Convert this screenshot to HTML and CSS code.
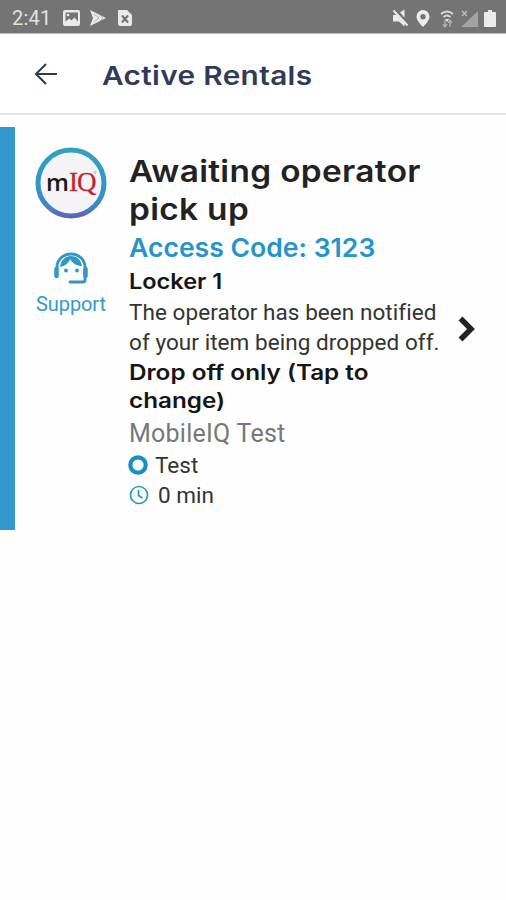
FILE: index.html
```html
<!DOCTYPE html>
<html lang="en">
<head>
<meta charset="utf-8">
<title>Active Rentals</title>
<link rel="stylesheet" href="styles.css">
</head>
<body>
<div class="statusbar">
  <span class="time">2:41</span>
  <svg class="left-icons" width="72" height="20" viewBox="0 0 72 20" fill="#e9e9e9">
    <path fill-rule="evenodd" d="M2 2h13q2 0 2 2v12q0 2-2 2H2q-2 0-2-2V4q0-2 2-2zM2.500 4.500v9l4-3 2 2 3-3 3.500 4v-9z"/>
    <circle cx="5" cy="7" r="1.300"/>
    <path d="M27 2l16 8-16 8 3-8z"/>
    <path d="M31 6l5 4-5 4M37 7l3 3-3 3" fill="none" stroke="#b5b5b5"/>
    <path d="M55 2h9l5 5v9q0 2-2 2H57q-2 0-2-2z"/>
    <path d="M59 7.500l6 7M65 7.500l-6 7" fill="none" stroke="#707070" stroke-width="2"/>
  </svg>
  <svg class="right-icons" width="106" height="20" viewBox="392 7 106 20" fill="#ececec">
    <path d="M393 14h3.500l8 8.500v3l-5.500-5h-6z"/>
    <path d="M400 11.500l4.500-3v8z"/>
    <path d="M393.500 9.500l14 15" stroke="#ececec" stroke-width="2"/>
    <path fill-rule="evenodd" d="M423 9a6.500 6.500 0 0 1 6.500 6.500c0 4.500-6.500 10.500-6.500 10.500s-6.500-6-6.500-10.500a6.500 6.500 0 0 1 6.500-6.500zm0 4a2.700 2.700 0 1 0 0 5.400 2.700 2.700 0 0 0 0-5.400z"/>
    <path d="M441 13q6-5 12 0M443.500 16q3.500-3 7 0" fill="none" stroke="#dadada" stroke-width="1.800"/>
    <path d="M445 18h4l-2 3z"/>
    <path d="M445 19v6m-2-2l2 3 2-3M450 26v-6m-2 2l2-3 2 3" fill="none" stroke="#b5b5b5" stroke-width="1.300"/>
    <path d="M478 10v16h-17z" fill="#a3a3a3"/>
    <path d="M462 10l5 5M467 10l-5 5" stroke="#c0c0c0" stroke-width="1.300"/>
    <path d="M488 9h4v2h3q1 0 1 1v13q0 1-1 1h-10q-1 0-1-1V12q0-1 1-1h3z"/>
  </svg>
</div>
<header class="appbar">
  <svg class="back" width="24" height="24" viewBox="0 0 24 24" fill="none" stroke="#303a59" stroke-width="2">
    <path d="M23 12H2M12 2L2 12l10 10"/>
  </svg>
  <h1>Active Rentals</h1>
</header>
<main class="rental">
  <aside class="side">
    <svg class="logo" width="72" height="72" viewBox="0 0 72 72">
      <defs><linearGradient id="ring" x1="0" y1="0" x2="0" y2="1">
        <stop offset="0" stop-color="#2fa3ba"/><stop offset=".5" stop-color="#3297cb"/>
        <stop offset=".88" stop-color="#4384c4"/><stop offset="1" stop-color="#6562b5"/>
      </linearGradient></defs>
      <circle cx="36" cy="36" r="33" fill="#f4f4f7" stroke="url(#ring)" stroke-width="5"/>
      <text x="11" y="44"><tspan class="logo-m">m</tspan><tspan class="logo-iq">IQ</tspan></text>
      <path d="M58.500 25h3M60 25v2" stroke="#999" stroke-width=".7"/>
    </svg>
    <svg class="agent" width="38" height="34" viewBox="0 0 38 34" fill="none" stroke="#3197c9">
      <path d="M5 17V15a14 13 0 0 1 28 0v13q0 2-2 2H18" stroke-width="2.900" stroke-linecap="round"/>
      <path d="M4.500 17v7M33.500 17v7" stroke-width="4.500" stroke-linecap="round"/>
      <path d="M8 15c5-1 9-4 10-8 3 5 7 7 12 7-1-6-5-10-11-10S9 8 8 15z" fill="#3197c9" stroke="none"/>
      <circle cx="14" cy="18.500" r="1.900" fill="#3197c9" stroke="none"/>
      <circle cx="25" cy="18.500" r="1.900" fill="#3197c9" stroke="none"/>
    </svg>
    <span class="support">Support</span>
  </aside>
  <section class="details">
    <h2>Awaiting operator<br>pick up</h2>
    <p class="code">Access Code: 3123</p>
    <p class="strong locker">Locker 1</p>
    <p class="desc">The operator has been notified<br>of your item being dropped off.</p>
    <p class="strong drop">Drop off only (Tap to<br>change)</p>
    <p class="org">MobileIQ Test</p>
    <p class="row place"><svg width="20" height="20" viewBox="0 0 20 20"><circle cx="10" cy="10" r="7.700" fill="none" stroke="#168fc5" stroke-width="4.200"/></svg><span class="label">Test</span></p>
    <p class="row duration"><svg width="20" height="20" viewBox="0 0 20 20" fill="none" stroke="#2d95c5" stroke-width="1.700"><circle cx="10" cy="10" r="8.500"/><path d="M9.500 5v5.500l4 2.500"/></svg><span class="label">0 min</span></p>
  </section>
  <svg class="chevron" width="18" height="26" viewBox="0 0 18 26" fill="none" stroke="#222" stroke-width="5.500">
    <path d="M2.500 2.500L13 13 2.500 23.500"/>
  </svg>
</main>
</body>
</html>
```
FILE: styles.css
```css
* { box-sizing: border-box; }
body {
  margin: 0;
  background: #fefefe;
  color: #222;
  font-family: Roboto, "Liberation Sans", sans-serif;
}
h1, h2, p { margin: 0; white-space: nowrap; }
svg { display: block; flex: none; }
.statusbar {
  display: flex;
  align-items: center;
  height: 34px;
  padding: 2px 8px 0 12px;
  background: #747474;
  border-bottom: 1px solid #bcbcbc;
}
.time { width: 51px; color: #e2e2e2; font-size: 20px; letter-spacing: .2px; }
.right-icons { margin-left: auto; }
.appbar {
  display: flex;
  align-items: center;
  height: 81px;
  padding: 0 34px;
  background: #fff;
  border-bottom: 2px solid #e5e5e5;
}
h1, h2, .code, .strong { transform-origin: left center; }
h1 {
  margin: 5px 0 0 44px;
  color: #303a59;
  font: 600 26px/36px Inter, sans-serif;
  letter-spacing: .3px;
  transform: scaleX(1.145);
}
.rental {
  display: flex;
  height: 403px;
  margin-top: 12px;
  border-left: 15px solid #3398cc;
}
.side {
  display: flex;
  flex-direction: column;
  align-items: center;
  width: 112px;
  padding-top: 20px;
}
.logo-m { font: 600 24px "Open Sans", sans-serif; fill: #171717; }
.logo-iq { font: 27px "Liberation Serif", serif; fill: #c41f32; stroke: #c41f32; stroke-width: .3px; letter-spacing: -1px; }
.agent { margin-top: 33px; }
.support { margin-top: 5px; color: #3599ca; font-size: 20px; line-height: 26px; letter-spacing: -.1px; }
.details { width: 318px; padding: 25px 0 0 2px; }
h2 { font: 600 30px/38px Inter, sans-serif; letter-spacing: .3px; transform: scaleX(1.113); }
.code { padding-top: 1px; height: 38px; color: #2494c9; font: 600 26px/38px Inter, sans-serif; transform: scaleX(1.022); }
.strong { color: #151515; font: 600 21px/28px Inter, sans-serif; transform: scaleX(1.155); }
.locker { height: 30px; padding-top: 1px; line-height: 30px; transform: scaleX(1.12); }
.desc { margin-top: 1px; color: #333; font-size: 22.5px; line-height: 30px; letter-spacing: .06px; }
.drop { margin-top: 2px; }
.org { height: 36px; padding-top: 1px; color: #777; font-size: 25px; line-height: 36px; letter-spacing: .25px; }
.row { display: flex; align-items: center; height: 30px; color: #333; font-size: 22.5px; }
.place { gap: 7px; margin: -1px 0 0 -1px; }
.duration { gap: 9px; }
.chevron { margin: 189px 0 0 13px; }
```
